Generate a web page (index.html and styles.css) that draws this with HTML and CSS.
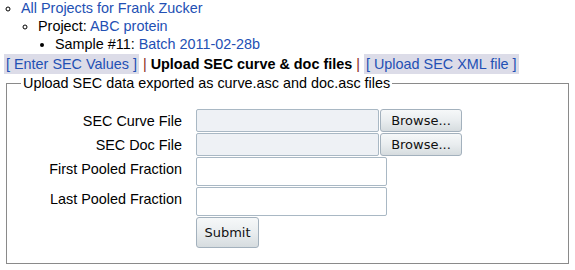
FILE: index.html
```html
<!DOCTYPE html>
<html>
<head>
<meta charset="utf-8">
<link rel="stylesheet" href="styles.css">
</head>
<body>
<ul class="crumbs">
  <li><a href="#">All Projects for Frank Zucker</a>
    <ul class="crumbs-2">
      <li>Project: <a href="#">ABC protein</a>
        <ul class="crumbs-3">
          <li>Sample #11: <a href="#">Batch 2011-02-28b</a></li>
        </ul>
      </li>
    </ul>
  </li>
</ul>
<div class="tabs">
  <a href="#" class="tab">[ Enter SEC Values ]</a>
  <span class="sep">|</span>
  <b class="current">Upload SEC curve &amp; doc files</b>
  <span class="sep">|</span>
  <a href="#" class="tab">[ Upload SEC XML file ]</a>
</div>
<fieldset class="box">
  <legend class="box-title">Upload SEC data exported as curve.asc and doc.asc files</legend>
  <div class="form">
    <label class="lbl">SEC Curve File</label>
    <div class="file"><span class="file-field"></span><span class="btn browse">Browse...</span></div>
    <label class="lbl">SEC Doc File</label>
    <div class="file"><span class="file-field"></span><span class="btn browse">Browse...</span></div>
    <label class="lbl">First Pooled Fraction</label>
    <div><input class="text" type="text"></div>
    <label class="lbl">Last Pooled Fraction</label>
    <div><input class="text" type="text"></div>
    <span></span>
    <div><button class="btn submit" type="button">Submit</button></div>
  </div>
</fieldset>
</body>
</html>
```
FILE: styles.css
```css
html, body {
  margin: 0;
  padding: 0;
  background: #fff;
}
body {
  font-family: "Liberation Sans", Arial, sans-serif;
  font-size: 14.4px;
  line-height: 18px;
  color: #000;
  padding: 0 4px;
}
a {
  color: #2350b4;
  text-decoration: none;
}
.crumbs {
  margin: -1px 0 0 0;
  padding-left: 17px;
  list-style-type: circle;
}
.crumbs-2 {
  margin: 0;
  padding-left: 17px;
  list-style-type: circle;
}
.crumbs-3 {
  margin: 0;
  padding-left: 17px;
  list-style-type: disc;
}
.tabs {
  margin-top: 1px;
  line-height: 20px;
}
.tab {
  background: #dcdce8;
  padding: 2px 2px;
}
.sep {
  color: #8a2a1a;
}
.current {
  font-weight: bold;
}
.box {
  margin: 0 2px;
  padding: 17px 10px 15px 10px;
  border: 1px solid #8a8a8a;
}
.box-title {
  padding: 0 2px;
  margin-left: 4px;
  line-height: 18px;
}
.form {
  display: grid;
  grid-template-columns: 165px auto;
  column-gap: 14px;
  row-gap: 1px;
}
.lbl {
  text-align: right;
  padding-top: 2px;
  line-height: 20px;
}
.file {
  display: flex;
  gap: 1px;
  height: 23px;
}
.file-field {
  display: block;
  width: 181px;
  height: 21px;
  background: #eef1f5;
  border: 1px solid #a9b8c4;
  border-radius: 2px;
}
.btn {
  font-family: "DejaVu Sans", sans-serif;
  font-size: 13px;
  color: #111;
  border: 1px solid #a3b1bd;
  border-radius: 3px;
  background: linear-gradient(#f6f8f9, #e9edef 50%, #d6dcdf);
  box-sizing: border-box;
}
.browse {
  display: flex;
  align-items: center;
  justify-content: center;
  width: 82px;
  height: 23px;
}
.text {
  display: block;
  box-sizing: border-box;
  width: 191px;
  height: 29px;
  margin: 0;
  border: 1px solid #a9b8c4;
  border-radius: 2px;
  background: #fff;
}
.submit {
  display: block;
  width: 63px;
  height: 31px;
  padding: 0;
  margin: 0;
}
```
